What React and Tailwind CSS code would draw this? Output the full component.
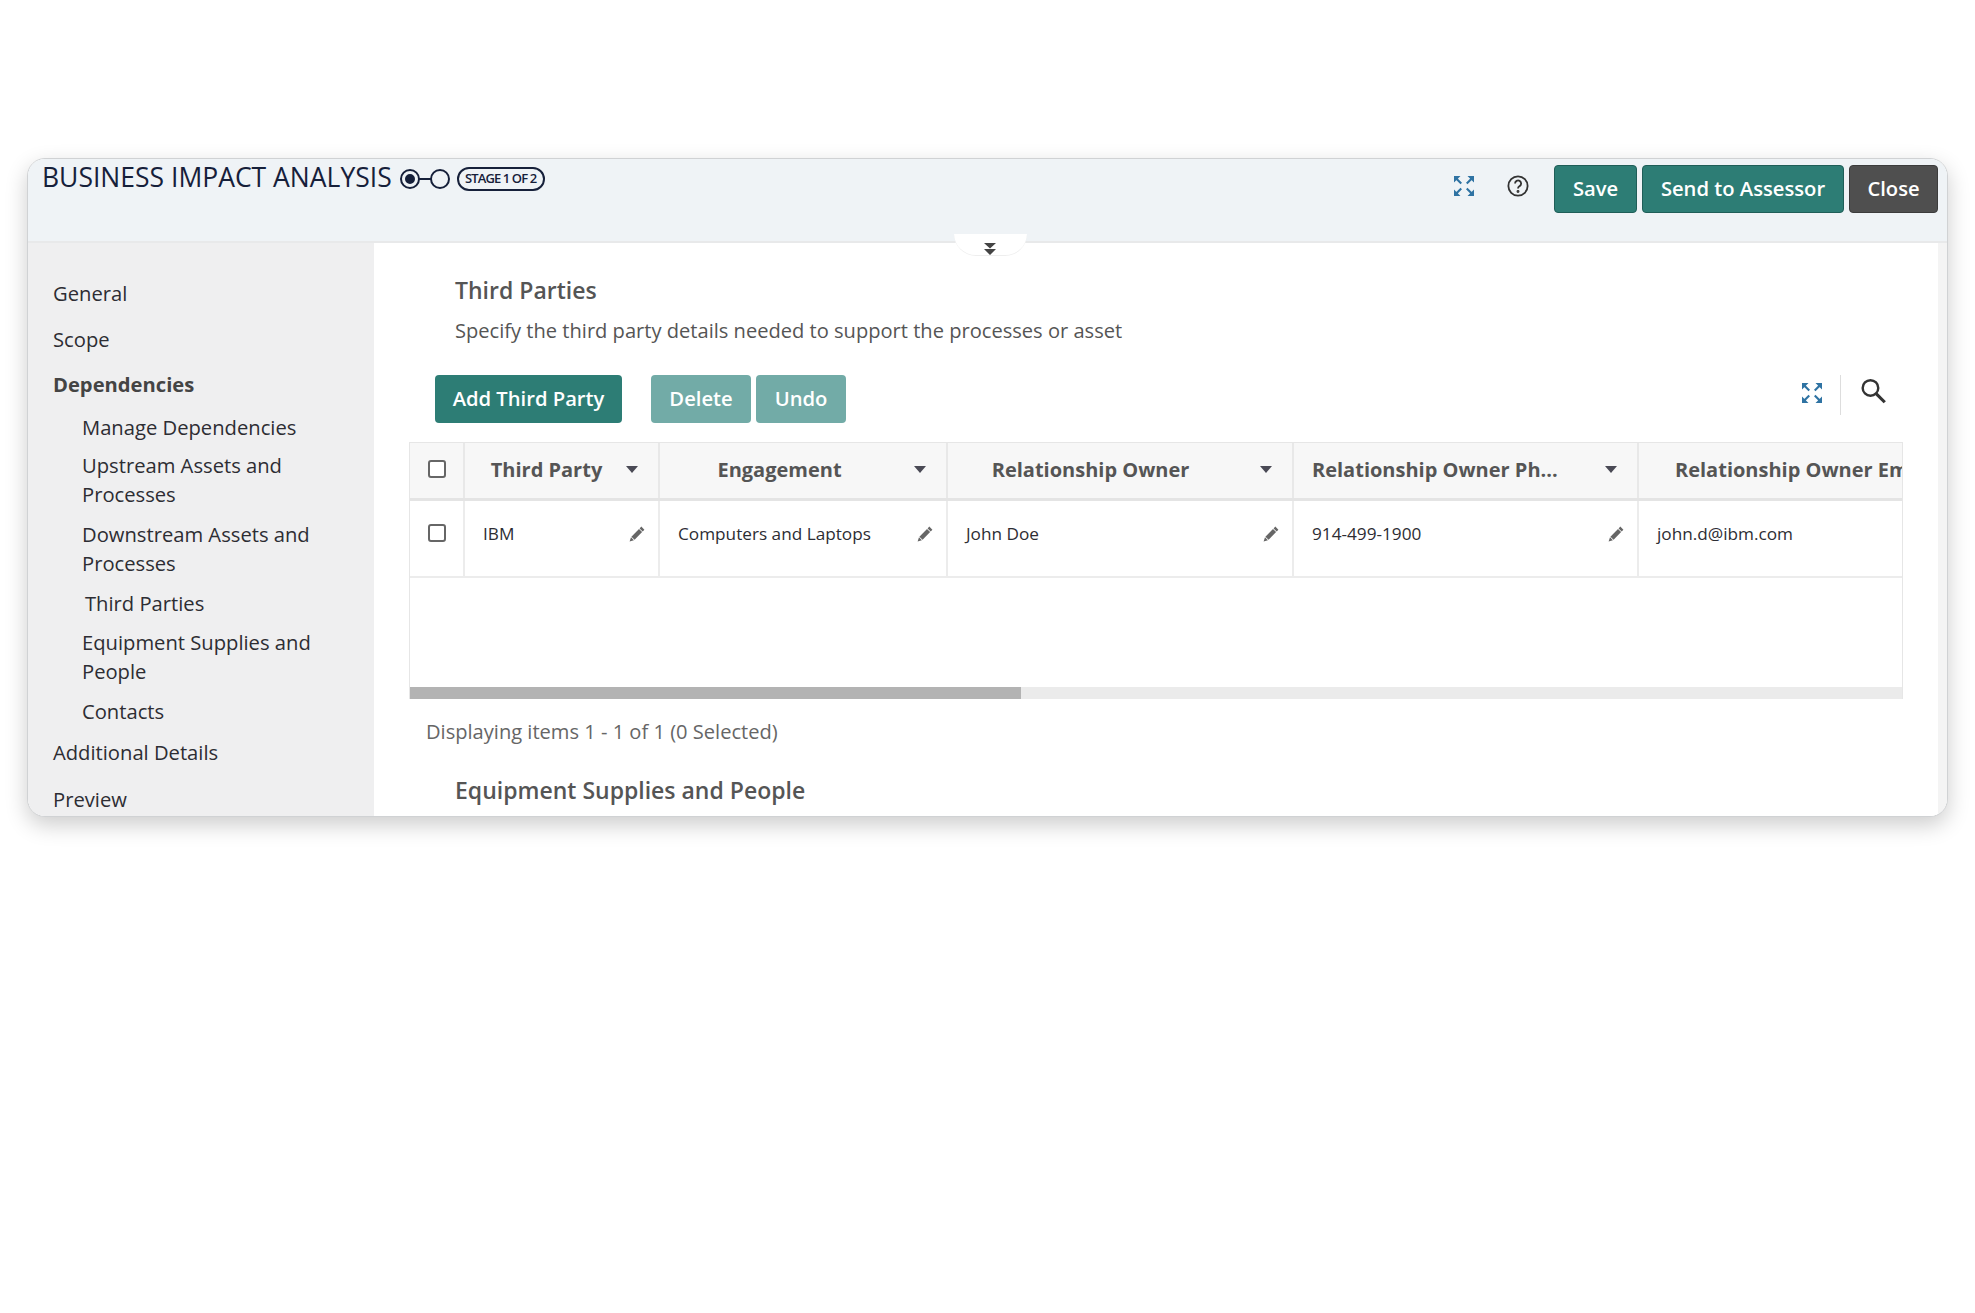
const ExpandIcon = () => (
  <svg width="20" height="20" viewBox="0 0 20 20" fill="#2f73a3" className="block">
    <path d="M0 0h6.500L0 6.500zM3 1.800l5 5-1.500 1.500-5-5z" />
    <path d="M20 0h-6.500L20 6.500zM17 1.800l-5 5 1.500 1.500 5-5z" />
    <path d="M0 20h6.500L0 13.500zM3 18.200l5-5-1.500-1.500-5 5z" />
    <path d="M20 20h-6.500L20 13.500zM17 18.200l-5-5 1.500-1.500 5 5z" />
  </svg>
);

const Pencil = () => (
  <svg width="16" height="16" viewBox="0 0 16 16" fill="#666" className="block">
    <path d="M12.300 0.600l3.100 3.100-1.700 1.800-3.100-3.100zM10 3l3.100 3.100-7.500 7.700-3.200-3.100zM2 11.300l2.900 2.900L0.600 15.600z" />
  </svg>
);

const Caret = () => (
  <svg width="14" height="9" viewBox="0 0 14 9" fill="#4a4a55" className="shrink-0">
    <path d="M1 1h12L7 8z" />
  </svg>
);

const Btn = ({ children, cls }) => (
  <button className={"h-[48px] pb-[2px] rounded-[4px] text-white text-[20.2px] font-semibold flex items-center justify-center " + cls}>
    {children}
  </button>
);

const nav = [
  ["General", "mt-[36px] ml-[25px]"],
  ["Scope", "mt-[17px] ml-[25px]"],
  ["Dependencies", "mt-[16px] ml-[25px] font-bold text-[#444]"],
  ["Manage Dependencies", "mt-[14px] ml-[54px]"],
  ["Upstream Assets and Processes", "mt-[9px] ml-[54px]"],
  ["Downstream Assets and Processes", "mt-[11px] ml-[54px]"],
  ["Third Parties", "mt-[11px] ml-[57px]"],
  ["Equipment Supplies and People", "mt-[10px] ml-[54px]"],
  ["Contacts", "mt-[11px] ml-[54px]"],
  ["Additional Details", "mt-[12px] ml-[25px]"],
  ["Preview", "mt-[18px] ml-[25px]"],
];

const columns = [
  { title: "Third Party", value: "IBM", w: "w-[195px]", head: "text-center pl-[3px]", caret: true },
  { title: "Engagement", value: "Computers and Laptops", w: "w-[288px]", head: "text-center pr-[14px]", caret: true },
  { title: "Relationship Owner", value: "John Doe", w: "w-[346px]", head: "text-center pr-[26px]", caret: true },
  { title: "Relationship Owner Ph...", value: "914-499-1900", w: "w-[345px]", head: "text-left pl-[18px]", caret: true },
  { title: "Relationship Owner Email", value: "john.d@ibm.com", w: "w-[346px]", head: "text-left pl-[36px]", caret: false },
];

export default function App() {
  return (
    <div className="min-h-[1313px] bg-white pt-[158px] pl-[27px] font-['Open_Sans',sans-serif]">
      <div className="relative w-[1921px] h-[659px] rounded-[18px] border border-[#d0d2d4] overflow-hidden shadow-[0_8px_22px_rgba(0,0,0,0.2)] flex flex-col bg-white">
        <header className="h-[84px] shrink-0 bg-[#eff3f6] border-b-2 border-[#e8e9ea] flex pl-[14px] pr-[9px]">
          <div className="flex items-center h-[36px] text-[#16203a]">
            <span className="text-[26.5px] font-medium leading-[36px] whitespace-nowrap">BUSINESS IMPACT ANALYSIS</span>
            <svg width="52" height="24" viewBox="0 0 52 24" fill="none" stroke="#16203a" strokeWidth="2" className="ml-[7px] mt-[3px]">
              <circle cx="11" cy="12" r="9" />
              <circle cx="11" cy="12" r="4" fill="#16203a" />
              <path d="M20 12h12" />
              <circle cx="41" cy="12" r="9" />
            </svg>
            <span className="ml-[6px] mt-[4px] h-[24px] w-[88px] rounded-full border-2 border-[#16203a] flex items-center justify-center text-[13px] font-semibold tracking-[-0.9px] whitespace-nowrap">
              STAGE 1 OF 2
            </span>
          </div>
          <div className="ml-auto flex items-start pt-[6px]">
            <div className="mt-[11px] mr-[33px]"><ExpandIcon /></div>
            <svg width="22" height="22" viewBox="0 0 24 24" fill="none" stroke="#333" strokeWidth="2" className="mt-[10px] mr-[25px]">
              <circle cx="12" cy="12" r="10.500" />
              <path d="M8.800 9.300a3.300 3.300 0 1 1 5 2.800c-1.200.8-1.800 1.400-1.800 2.700" />
              <circle cx="12" cy="18" r="0.600" fill="#333" />
            </svg>
            <Btn cls="w-[83px] bg-[#2d7d75] border border-[#1f5e58]">Save</Btn>
            <Btn cls="w-[202px] bg-[#2d7d75] border border-[#1f5e58] ml-[5px]">Send to Assessor</Btn>
            <Btn cls="w-[89px] bg-[#4f4f4f] border border-[#3c3c3c] ml-[5px]">Close</Btn>
          </div>
        </header>

        <div className="absolute left-[926px] top-[75px] w-[73px] h-[22px] bg-white rounded-b-[30px] border-b border-[#eeeeee] flex justify-center z-10">
          <svg width="14" height="14" viewBox="0 0 14 14" fill="#444" className="mt-[8px] -ml-[2px]">
            <path d="M1 1h12L7 6.500zM1 7h12l-6 6z" />
          </svg>
        </div>

        <div className="flex-1 flex min-h-0">
          <nav className="w-[346px] shrink-0 bg-[#efeff0] text-[20.2px] leading-[29px] text-[#2d2d33]">
            {nav.map(([label, cls]) => (
              <div key={label} className={"w-[250px] " + cls}>{label}</div>
            ))}
          </nav>

          <main className="flex-1 min-w-0 bg-white pl-[35px]">
            <h2 className="ml-[46px] mt-[32px] text-[23px] leading-[30px] font-semibold text-[#555]">Third Parties</h2>
            <p className="ml-[46px] mt-[11px] text-[20.1px] leading-[30px] text-[#555]">
              Specify the third party details needed to support the processes or asset
            </p>
            <div className="ml-[26px] mt-[29px] flex items-start w-[1468px]">
              <Btn cls="w-[187px] bg-[#2d7d75]">Add Third Party</Btn>
              <Btn cls="w-[100px] bg-[#72aba7] ml-[29px]">Delete</Btn>
              <Btn cls="w-[90px] bg-[#72aba7] ml-[5px]">Undo</Btn>
              <div className="ml-auto mt-[8px] mr-[18px]"><ExpandIcon /></div>
              <div className="h-[40px] w-px bg-[#dddddd] mr-[19px]"></div>
              <svg width="27" height="26" viewBox="0 0 30 30" fill="none" stroke="#333" strokeWidth="2.800" className="mr-[16px] mt-[3px]">
                <circle cx="11.500" cy="11.500" r="9" />
                <path d="M18 18L28 28" strokeWidth="3.600" />
              </svg>
            </div>

            <div className="mt-[19px] w-[1494px] h-[257px] flex flex-col overflow-hidden border border-[#e6e6e6] border-b-0">
              <div className="flex h-[58px] shrink-0 bg-[#f7f7f7] border-b-[3px] border-[#e4e4e4]">
                <div className="w-[55px] shrink-0 border-r-2 border-[#e8e8e8] flex items-center justify-center pb-[3px]">
                  <input type="checkbox" className="appearance-none w-[18px] h-[18px] border-2 border-[#666] rounded-[3px] bg-white" />
                </div>
                {columns.map((c) => (
                  <div key={c.title} className={"shrink-0 border-r-2 border-[#e8e8e8] flex items-center pr-[19px] pb-[2px] " + c.w}>
                    <div className={"flex-1 whitespace-nowrap text-[20px] font-bold text-[#555] " + c.head}>{c.title}</div>
                    {c.caret && <Caret />}
                  </div>
                ))}
              </div>
              <div className="flex h-[77px] shrink-0 border-b-2 border-[#ececec]">
                <div className="w-[55px] shrink-0 border-r-2 border-[#ececec] flex justify-center pt-[23px]">
                  <input type="checkbox" className="appearance-none w-[18px] h-[18px] border-2 border-[#666] rounded-[3px] bg-white" />
                </div>
                {columns.map((c) => (
                  <div key={c.value} className={"shrink-0 border-r-2 border-[#ececec] flex items-start pl-[18px] pr-[13px] pt-[21px] text-[17.2px] leading-[24px] text-[#2d2d33] " + c.w}>
                    <span className="flex-1">{c.value}</span>
                    {c.caret && <span className="mt-[4px]"><Pencil /></span>}
                  </div>
                ))}
              </div>
              <div className="flex-1"></div>
              <div className="h-[12px] shrink-0 bg-[#ebebeb]">
                <div className="h-full w-[611px] bg-[#b3b3b3]"></div>
              </div>
            </div>

            <p className="ml-[17px] mt-[18px] text-[20.1px] leading-[30px] text-[#666]">Displaying items 1 - 1 of 1 (0 Selected)</p>
            <h2 className="ml-[46px] mt-[28px] text-[23px] leading-[30px] font-semibold text-[#555]">Equipment Supplies and People</h2>
          </main>

          <div className="w-[9px] shrink-0 bg-[#f4f4f4]"></div>
        </div>
      </div>
    </div>
  );
}
